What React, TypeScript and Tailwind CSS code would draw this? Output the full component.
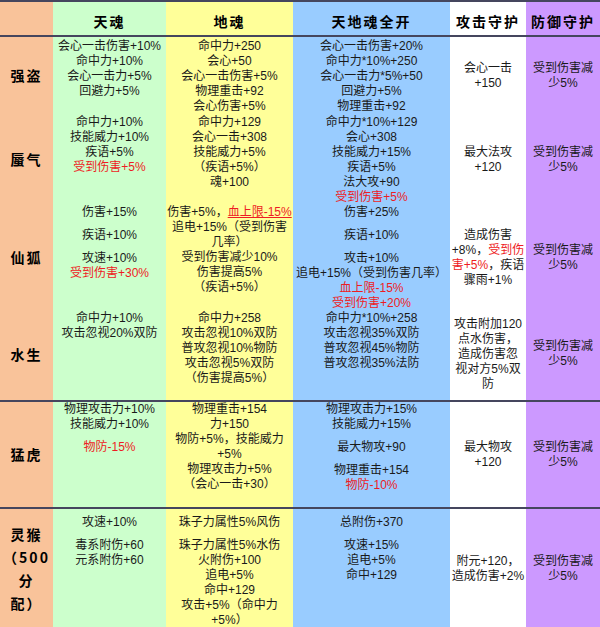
import React from 'react';

// line syntax: leading "^" = extra gap above, leading "!" = whole line red,
// "{...}" = red segment, "[...]" = red underlined segment
type Row = {
  name: string[];
  h: string;
  pt: string;
  green: string[];
  yellow: string[];
  blue: string[];
  white: string[];
};

const rows: Row[] = [
  {
    name: ['强盗'],
    h: 'h-[77px]',
    pt: 'pt-[2px]',
    green: ['会心一击伤害+10%', '命中力+10%', '会心一击力+5%', '回避力+5%'],
    yellow: ['命中力+250', '会心+50', '会心一击伤害+5%', '物理重击+92', '会心伤害+5%'],
    blue: ['会心一击伤害+20%', '命中力*10%+250', '会心一击力*5%+50', '回避力+5%', '物理重击+92'],
    white: ['会心一击', '+150'],
  },
  {
    name: ['蜃气'],
    h: 'h-[90px]',
    pt: 'pt-[1px]',
    green: ['命中力+10%', '技能威力+10%', '疾语+5%', '!受到伤害+5%'],
    yellow: ['命中力+129', '会心一击+308', '技能威力+5%', '（疾语+5%）', '魂+100'],
    blue: ['命中力*10%+129', '会心+308', '技能威力+15%', '疾语+5%', '法大攻+90', '!受到伤害+5%'],
    white: ['最大法攻', '+120'],
  },
  {
    name: ['仙狐'],
    h: 'h-[104px]',
    pt: 'pt-[1px]',
    green: ['伤害+15%', '^疾语+10%', '^攻速+10%', '!受到伤害+30%'],
    yellow: ['伤害+5%，[血上限-15%]', '追电+15%（受到伤害', '几率）', '受到伤害减少10%', '伤害提高5%', '（疾语+5%）'],
    blue: ['伤害+25%', '^疾语+10%', '^攻击+10%', '追电+15%（受到伤害几率）', '!血上限-15%', '!受到伤害+20%'],
    white: ['造成伤害', '+8%，{受到伤}', '{害+5%}，疾语', '骤雨+1%'],
  },
  {
    name: ['水生'],
    h: 'h-[94px]',
    pt: 'pt-[3px]',
    green: ['命中力+10%', '攻击忽视20%双防'],
    yellow: ['命中力+258', '攻击忽视10%双防', '普攻忽视10%物防', '攻击忽视5%双防', '（伤害提高5%）'],
    blue: ['命中力*10%+258', '攻击忽视35%双防', '普攻忽视45%物防', '普攻忽视35%法防'],
    white: ['攻击附加120', '点水伤害，', '造成伤害忽', '视对方5%双', '防'],
  },
  {
    name: ['猛虎'],
    h: 'h-[107px]',
    pt: 'pt-[0px]',
    green: ['物理攻击力+10%', '技能威力+10%', '^!物防-15%'],
    yellow: ['物理重击+154', '力+150', '物防+5%，技能威力', '+5%', '物理攻击力+5%', '（会心一击+30）'],
    blue: ['物理攻击力+15%', '技能威力+15%', '^最大物攻+90', '^物理重击+154', '!物防-10%'],
    white: ['最大物攻', '+120'],
  },
  {
    name: ['灵猴', '（500', '分', '配）'],
    h: 'h-[118px]',
    pt: 'pt-[6px]',
    green: ['攻速+10%', '^毒系附伤+60', '元系附伤+60'],
    yellow: ['珠子力属性5%风伤', '^珠子力属性5%水伤', '火附伤+100', '追电+5%', '命中+129', '攻击+5%（命中力', '+5%）'],
    blue: ['总附伤+370', '^攻速+15%', '追电+5%', '命中+129'],
    white: ['附元+120，', '造成伤害+2%'],
  },
];

const cols = 'grid grid-cols-[53px_113px_127px_157px_76px_74px]';

function Line({ text }: { text: string }) {
  let s = text;
  let gap = false;
  let red = false;
  if (s.startsWith('^')) {
    gap = true;
    s = s.slice(1);
  }
  if (s.startsWith('!')) {
    red = true;
    s = s.slice(1);
  }
  const parts = s.split(/(\{[^}]*\}|\[[^\]]*\])/).filter(Boolean);
  return (
    <div className={`whitespace-nowrap ${gap ? 'mt-[8px]' : ''} ${red ? 'text-[#ee1c24]' : ''}`}>
      {parts.map((p, i) => {
        if (p.startsWith('{')) return <span key={i} className="text-[#ee1c24]">{p.slice(1, -1)}</span>;
        if (p.startsWith('[')) return <span key={i} className="text-[#ee1c24] underline">{p.slice(1, -1)}</span>;
        return <span key={i}>{p}</span>;
      })}
    </div>
  );
}

function Lines({ lines, className }: { lines: string[]; className: string }) {
  return (
    <div className={`flex flex-col items-center text-center ${className}`}>
      {lines.map((l, i) => (
        <Line key={i} text={l} />
      ))}
    </div>
  );
}

const headFont = 'font-["Noto_Sans_CJK_SC",sans-serif] font-bold text-[14px] tracking-[2px] text-black';

export default function App() {
  return (
    <div className="w-[600px] h-[627px] bg-white overflow-hidden font-['Liberation_Sans','Noto_Sans_CJK_SC',sans-serif] text-[12px] leading-[15px] text-[#1a1a1a]">
      <div className={`${cols} h-[37px] border-y-2 border-[#45465e]`}>
        <div className="bg-[#f9c39a]" />
        <div className={`bg-[#ccffcc] flex items-center justify-center pt-[6px] ${headFont}`}>天魂</div>
        <div className={`bg-[#ffff99] flex items-center justify-center pt-[6px] ${headFont}`}>地魂</div>
        <div className={`bg-[#99ccff] flex items-center justify-center pt-[6px] ${headFont}`}>天地魂全开</div>
        <div className={`bg-white flex items-center justify-center pt-[6px] ${headFont} tracking-[1px]`}>攻击守护</div>
        <div className={`bg-[#cc99ff] flex items-center justify-center pt-[6px] ${headFont} tracking-[1px]`}>防御守护</div>
      </div>
      {rows.map((r) => (
        <div key={r.name[0]} className={`${cols} ${r.h} border-b-2 border-[#45465e]`}>
          <div className={`bg-[#f9c39a] flex flex-col items-center justify-center ${headFont} leading-[23px]`}>
            {r.name.map((n) => (
              <div key={n} className="whitespace-nowrap">{n}</div>
            ))}
          </div>
          <Lines lines={r.green} className={`bg-[#ccffcc] ${r.pt}`} />
          <Lines lines={r.yellow} className={`bg-[#ffff99] ${r.pt}`} />
          <Lines lines={r.blue} className={`bg-[#99ccff] ${r.pt}`} />
          <Lines lines={r.white} className="bg-white justify-center" />
          <Lines lines={['受到伤害减', '少5%']} className="bg-[#cc99ff] justify-center" />
        </div>
      ))}
    </div>
  );
}
